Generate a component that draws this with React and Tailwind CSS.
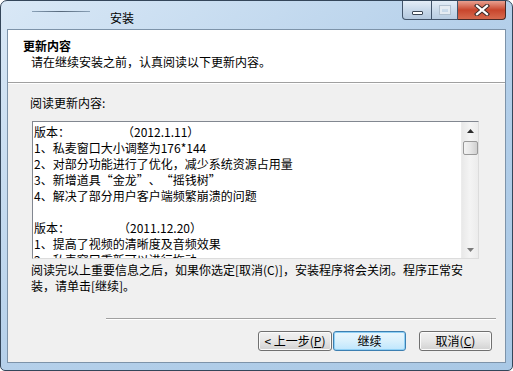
import React from "react";

const font = "font-['Noto_Sans_CJK_SC','Noto_Sans',sans-serif]";

function WinButtons() {
  return (
    <div className="flex h-[19px] mr-[6px]">
      <div className="w-[30px] h-full border border-t-0 border-[#42546a] rounded-bl-[4px] bg-gradient-to-b from-[#e4edf7] via-[#c9d9ea] to-[#b3c8de] flex items-center justify-center">
        <div className="w-[11px] h-[4px] mt-[5px] bg-white border border-[#3b4654] rounded-[1px]" />
      </div>
      <div className="w-[26px] h-full border border-t-0 border-l-0 border-[#42546a] bg-gradient-to-b from-[#e4edf7] via-[#cbdbeb] to-[#b8cce1] flex items-center justify-center">
        <div className="w-[10px] h-[8px] border-[2px] border-t-[3px] border-[#e9eef4] opacity-90 shadow-[0_0_0_1px_#aebdcc]" />
      </div>
      <div className="w-[48px] h-full border border-t-0 border-l-0 border-[#4a2a26] rounded-br-[4px] bg-gradient-to-b from-[#e8a090] via-[#c8452c] to-[#d66a4e] flex items-center justify-center">
        <svg width="16" height="12" viewBox="0 0 16 12">
          <path d="M3 1.8 L13 10.2 M13 1.8 L3 10.2" stroke="#3a2a28" strokeWidth="4.2" strokeLinecap="square" fill="none" />
          <path d="M3 1.8 L13 10.2 M13 1.8 L3 10.2" stroke="#ffffff" strokeWidth="2.2" strokeLinecap="square" fill="none" />
        </svg>
      </div>
    </div>
  );
}

function Btn({ children, w, focused }) {
  return (
    <div
      className={
        "h-[20px] rounded-[3px] border flex items-center justify-center text-[12px] leading-none text-black " +
        w +
        " " +
        (focused
          ? "border-[#3c7fb1] bg-gradient-to-b from-[#eaf6fd] via-[#d9f0fc] to-[#bee6fd] shadow-[inset_0_0_0_1px_#8fd0f5]"
          : "border-[#707070] bg-gradient-to-b from-[#f2f2f2] via-[#e6e6e6] to-[#d2d2d2] shadow-[inset_0_0_0_1px_#fbfbfb]")
      }
    >
      {children}
    </div>
  );
}

function ScrollBar() {
  return (
    <div className="w-[17px] h-full flex flex-col items-center bg-gradient-to-r from-[#e9e9e9] via-[#f4f4f4] to-[#ececec] border-l border-[#ececec]">
      <div className="h-[17px] w-full flex items-center justify-center">
        <svg width="7" height="4" viewBox="0 0 7 4">
          <path d="M3.5 0 L7 4 L0 4 Z" fill="#2d2d2d" />
        </svg>
      </div>
      <div className="mt-[2px] w-[15px] h-[14px] rounded-[2px] border border-[#999999] bg-gradient-to-r from-[#f3f3f3] via-[#e6e6e6] to-[#d0d0d0]" />
      <div className="flex-1" />
      <div className="h-[17px] w-full flex items-center justify-center">
        <svg width="7" height="4" viewBox="0 0 7 4">
          <path d="M0 0 L7 0 L3.5 4 Z" fill="#7a7a7a" />
        </svg>
      </div>
    </div>
  );
}

const LQ = () => <span className="inline-block w-[12px] text-right">“</span>;
const RQ = () => <span className="inline-block w-[12px] text-left">”</span>;

export default function App() {
  const lines = [
    <span key="a" className="whitespace-pre">版本：<span className="inline-block w-[52px]" />（2012.1.11）</span>,
    "1、私麦窗口大小调整为176*144",
    "2、对部分功能进行了优化，减少系统资源占用量",
    <span key="q">3、新增道具<LQ />金龙<RQ />、<LQ />摇钱树<RQ /></span>,
    "4、解决了部分用户客户端频繁崩溃的问题",
    "\u00a0",
    <span key="b" className="whitespace-pre">版本：<span className="inline-block w-[48px]" />（2011.12.20）</span>,
    "1、提高了视频的清晰度及音频效果",
    "2、私麦窗口重新可以进行拖动",
  ];
  return (
    <div lang="zh-CN" className={"w-[513px] h-[371px] " + font + " text-[12px] leading-[16px] text-black"}>
      <div className="w-full h-full flex flex-col rounded-t-[7px] rounded-b-[5px] border border-[#34465a] bg-gradient-to-br from-[#d9e8f6] via-[#b5d0ea] to-[#a9c8e5] overflow-hidden">
        {/* title bar */}
        <div className="h-[28px] flex items-start justify-between">
          <div className="flex items-start">
            <div className="ml-[31px] mt-[10px] w-[58px] h-[1px] bg-gradient-to-r from-[#8ba2b8] via-[#55677a] to-[#8ba2b8]" />
            <div className="ml-[20px] mt-[9px] text-[12px] leading-[16px] text-black">安装</div>
          </div>
          <WinButtons />
        </div>
        {/* client */}
        <div className="flex-1 mx-[6px] mb-[7px] border border-[#7d93a9] bg-[#f0f0f0] flex flex-col">
          <div className="h-[53px] bg-white pl-[15px] pt-[8px] border-b border-[#a0a0a0]">
            <div className="font-bold">更新内容</div>
            <div className="pl-[8px]">请在继续安装之前，认真阅读以下更新内容。</div>
          </div>
          <div className="h-px bg-white" />
          <div className="ml-[22px] mt-[11px]">阅读更新内容:</div>
          <div className="ml-[24px] mt-[10px] w-[447px] h-[138px] border border-t-[#828790] border-l-[#828790] border-r-[#dcdcdc] border-b-[#dcdcdc] bg-white flex">
            <div className="flex-1 overflow-hidden pl-[1px] pt-[2px] whitespace-nowrap">
              {lines.map((l, i) => (
                <div key={i}>{l}</div>
              ))}
            </div>
            <ScrollBar />
          </div>
          <div className="ml-[23px] mt-[3px] whitespace-nowrap">
            阅读完以上重要信息之后，如果你选定[取消(C)]，安装程序将会关闭。程序正常安
            <br />
            装，请单击[继续]。
          </div>
          <div className="ml-[98px] mr-[9px] mt-[24px] h-px bg-[#a0a0a0]" />
          <div className="ml-[98px] mr-[9px] h-px bg-white" />
          <div className="mt-[11px] mr-[13px] flex justify-end">
            <Btn w="w-[74px]">&lt; 上一步(<span className="underline">P</span>)</Btn>
            <div className="w-[1px]" />
            <Btn w="w-[73px]" focused>继续</Btn>
            <div className="w-[13px]" />
            <Btn w="w-[73px]">取消(<span className="underline">C</span>)</Btn>
          </div>
        </div>
      </div>
    </div>
  );
}
